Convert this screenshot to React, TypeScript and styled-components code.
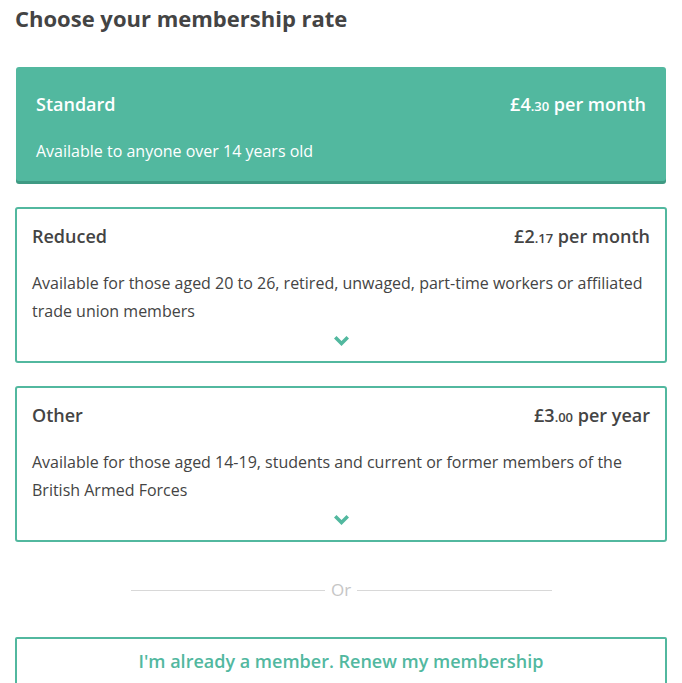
import React from "react";
import styled, { createGlobalStyle } from "styled-components";

const GlobalStyle = createGlobalStyle`
  * { box-sizing: border-box; }
  body {
    margin: 0;
    background: #fff;
    font-family: 'Open Sans', 'Liberation Sans', sans-serif;
    color: #444;
  }
`;

const teal = "#52b89f";

const Page = styled.main`
  padding: 3px 15px 0;
  display: flex;
  flex-direction: column;
`;

const Heading = styled.h1`
  margin: 0 0 34px;
  font-size: 22px;
  line-height: 30px;
  font-weight: 700;
  color: #444;
`;

const Options = styled.div`
  display: flex;
  flex-direction: column;
  gap: 23px;
`;

const Card = styled.div<{ selected?: boolean }>`
  border-radius: 3px;
  cursor: pointer;
  ${({ selected }) =>
    selected
      ? `
    margin: 0 1px 3px;
    background: ${teal};
    color: #fff;
    padding: 25px 20px 16px;
    box-shadow: 0 3px 0 #3f9a83;
  `
      : `
    background: #fff;
    color: #444;
    border: 2px solid ${teal};
    padding: 15px 15px 10px;
  `}
`;

const CardHead = styled.div`
  display: flex;
  justify-content: space-between;
  align-items: baseline;
  font-size: 18px;
  line-height: 24px;
  font-weight: 600;
`;

const Price = styled.span`
  small {
    font-size: 13px;
    font-weight: 600;
  }
`;

const Desc = styled.p`
  margin: 19px 0 0;
  font-size: 16px;
  line-height: 28px;
`;

const More = styled.div`
  display: flex;
  justify-content: center;
  align-items: center;
  height: 20px;
  margin-top: 6px;
`;

const Divider = styled.div`
  margin: 36px auto 0;
  width: 421px;
  display: flex;
  align-items: center;
  gap: 6px;
  font-size: 17px;
  line-height: 24px;
  color: #c6c6c6;

  &::before,
  &::after {
    content: "";
    flex: 1;
    height: 1px;
    background: #d8d8d8;
  }
`;

const RenewButton = styled.button`
  margin-top: 35px;
  width: 100%;
  background: #fff;
  border: 2px solid ${teal};
  border-radius: 2px;
  padding: 10px 0;
  font-family: inherit;
  font-size: 18px;
  line-height: 24px;
  font-weight: 600;
  color: ${teal};
  cursor: pointer;
`;

const Chevron = () => (
  <svg width="15" height="10" viewBox="0 0 15 10" aria-hidden="true">
    <polygon points="0,2.5 2.5,0 7.5,5 12.5,0 15,2.5 7.5,10" fill={teal} />
  </svg>
);

const rates = [
  {
    key: "standard",
    name: "Standard",
    pounds: "£4",
    pence: ".30",
    period: "per month",
    text: "Available to anyone over 14 years old",
    selected: true,
  },
  {
    key: "reduced",
    name: "Reduced",
    pounds: "£2",
    pence: ".17",
    period: "per month",
    text: "Available for those aged 20 to 26, retired, unwaged, part-time workers or affiliated trade union members",
  },
  {
    key: "other",
    name: "Other",
    pounds: "£3",
    pence: ".00",
    period: "per year",
    text: "Available for those aged 14-19, students and current or former members of the British Armed Forces",
  },
];

const App = () => (
  <>
    <GlobalStyle />
    <Page>
      <Heading>Choose your membership rate</Heading>
      <Options>
        {rates.map((r) => (
          <Card key={r.key} selected={r.selected}>
            <CardHead>
              <span>{r.name}</span>
              <Price>
                {r.pounds}
                <small>{r.pence}</small> {r.period}
              </Price>
            </CardHead>
            <Desc>{r.text}</Desc>
            {!r.selected && (
              <More>
                <Chevron />
              </More>
            )}
          </Card>
        ))}
      </Options>
      <Divider>Or</Divider>
      <RenewButton>I'm already a member. Renew my membership</RenewButton>
    </Page>
  </>
);

export default App;
